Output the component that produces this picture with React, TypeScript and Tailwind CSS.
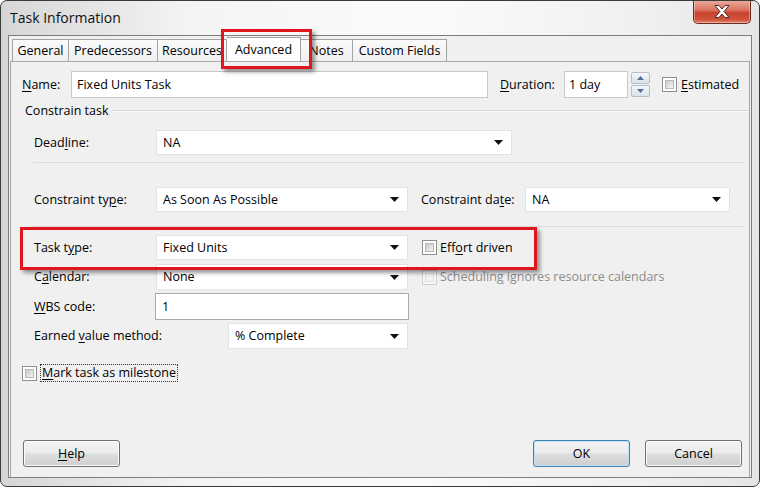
import React from "react";

function U({ children }: { children: React.ReactNode }) {
  return <span className="underline decoration-1 underline-offset-[2px]">{children}</span>;
}

function Arrow() {
  return (
    <svg width="9" height="5" viewBox="0 0 9 5" className="shrink-0">
      <path d="M0 0H9L4.5 5Z" fill="#111" />
    </svg>
  );
}

function Combo({ value, className }: { value: string; className: string }) {
  return (
    <div
      className={
        "flex items-center justify-between bg-white border border-[#e2e2e2] pl-[6px] pr-[8px] shrink-0 " +
        className
      }
    >
      <span>{value}</span>
      <Arrow />
    </div>
  );
}

function Check({ disabled }: { disabled?: boolean }) {
  return (
    <div
      className={
        disabled
          ? "w-[15px] h-[15px] border border-[#cfcfcf] bg-[#f7f7f7] p-[2px] shrink-0"
          : "w-[15px] h-[15px] border border-[#8e8f8f] bg-white p-[2px] shrink-0"
      }
    >
      <div
        className={
          disabled
            ? "w-full h-full bg-[#f2f2f2] border border-[#e2e2e2]"
            : "w-full h-full border border-[#b4b7bb] bg-gradient-to-br from-[#c6c9ce] to-[#f6f6f6]"
        }
      />
    </div>
  );
}

function Tab({
  children,
  className,
  selected,
}: {
  children: React.ReactNode;
  className: string;
  selected?: boolean;
}) {
  return (
    <div
      className={
        (selected
          ? "h-[24px] bg-[#fdfdfd] "
          : "h-[22px] bg-[linear-gradient(#fbfbfb,#efefef)] ") +
        "flex items-center justify-center border-t border-r border-[#a3a3a3] shrink-0 " +
        className
      }
    >
      {children}
    </div>
  );
}

function Btn({ children, primary }: { children: React.ReactNode; primary?: boolean }) {
  return (
    <div
      className={
        (primary
          ? "border-[#3c7fb1] shadow-[inset_0_0_0_1px_#bfe6f7] "
          : "border-[#707070] shadow-[inset_0_0_0_1px_#fbfbfb] ") +
        "w-[97px] h-[27px] rounded-[3px] border flex items-center justify-center bg-[linear-gradient(#f3f3f3,#ebebeb_48%,#dedede_52%,#cfcfcf)]"
      }
    >
      {children}
    </div>
  );
}

function SpinBtn({ up }: { up?: boolean }) {
  return (
    <div className="h-[12px] border border-[#b7c0ca] rounded-[2px] bg-[linear-gradient(#f5f7fa,#dbe2ea)] flex items-center justify-center">
      <svg width="7" height="4" viewBox="0 0 7 4">
        {up ? <path d="M0 4H7L3.5 0Z" fill="#4f6f9c" /> : <path d="M0 0H7L3.5 4Z" fill="#4f6f9c" />}
      </svg>
    </div>
  );
}

export default function App() {
  return (
    <div className="w-[760px] h-[487px] relative overflow-hidden rounded-[7px] border border-[#3a3a3a] bg-[linear-gradient(90deg,#d6d6d6,#f4f4f4_25%,#fbfbfb_55%,#f0f0f0_85%,#e6e6e6)] font-['Open_Sans',sans-serif] text-[12.5px] leading-[18px] text-black flex flex-col">
      {/* title bar */}
      <div className="h-[34px] flex items-start justify-between shrink-0">
        <div className="h-[34px] flex items-center pl-[9px] text-[14px] text-[#111]">Task Information</div>
        <div className="-mt-[1px] mr-[8px] w-[58px] h-[24px] rounded-b-[5px] border border-t-0 border-[#6a2c22] bg-[linear-gradient(#eab0a2,#d9705b_45%,#c7432d_55%,#d0533c_85%,#e38a6f)] shadow-[inset_0_0_0_1px_rgba(255,220,210,0.45)] flex items-center justify-center">
          <svg width="18" height="15" viewBox="0 0 18 15">
            <path
              d="M2 1.5H6L9 5L12 1.5H16L11 7.5L16 13.5H12L9 10L6 13.5H2L7 7.5Z"
              fill="#ffffff"
              stroke="#5a2a22"
              strokeWidth="1"
              strokeLinejoin="round"
            />
          </svg>
        </div>
      </div>

      {/* client area */}
      <div className="mx-[7px] h-[443px] border border-[#7d7d7d] bg-[#f0f0f0] flex flex-col shrink-0">
        {/* tab strip */}
        <div className="h-[25px] flex items-end pl-[3px] shrink-0">
          <Tab className="w-[57px] border-l">General</Tab>
          <Tab className="w-[89px]">Predecessors</Tab>
          <Tab className="w-[69px]">Resources</Tab>
          <Tab className="w-[74px]" selected>
            Advanced
          </Tab>
          <Tab className="w-[52px]">Notes</Tab>
          <Tab className="w-[94px]">Custom Fields</Tab>
        </div>

        {/* tab page */}
        <div className="mx-[1px] flex-1 border-t border-l border-r border-[#a9a9a9] bg-[#f0f0f0] flex flex-col">
          {/* name row */}
          <div className="mt-[9px] h-[27px] flex items-center pl-[11px]">
            <div className="w-[49px]">
              <U>N</U>ame:
            </div>
            <div className="w-[417px] h-[27px] bg-white border border-[#c8c8c8] flex items-center pl-[5px]">
              Fixed Units Task
            </div>
            <div className="ml-[12px] w-[64px]">
              <U>D</U>uration:
            </div>
            <div className="w-[64px] h-[27px] bg-white border border-[#c8c8c8] flex items-center pl-[4px]">
              1 day
            </div>
            <div className="ml-[3px] w-[19px] flex flex-col gap-[1px]">
              <SpinBtn up />
              <SpinBtn />
            </div>
            <div className="ml-[12px]">
              <Check />
            </div>
            <div className="ml-[4px]">
              <U>E</U>stimated
            </div>
          </div>

          {/* constrain task group */}
          <div className="mt-[4px] h-[18px] flex items-center pl-[14px]">
            <span>Constrain task</span>
            <div className="ml-[4px] flex-1 h-0 border-t border-b border-t-[#d6d6d6] border-b-[#fafafa]" />
          </div>

          <div className="mt-[10px] h-[25px] flex items-center pl-[23px]">
            <div className="w-[122px]">
              Dead<U>l</U>ine:
            </div>
            <Combo value="NA" className="w-[356px] h-[25px]" />
          </div>

          <div className="mt-[7px] ml-[22px] mr-[5px] border-t border-[#dcdcdc]" />

          <div className="mt-[24px] h-[25px] flex items-center pl-[23px]">
            <div className="w-[122px]">
              Constraint ty<U>p</U>e:
            </div>
            <Combo value="As Soon As Possible" className="w-[252px] h-[25px]" />
            <div className="ml-[13px] w-[104px]">
              Constraint da<U>t</U>e:
            </div>
            <Combo value="NA" className="w-[205px] h-[25px]" />
          </div>

          <div className="mt-[14px] ml-[22px] mr-[5px] border-t border-[#dcdcdc]" />

          <div className="mt-[8px] h-[25px] flex items-center pl-[23px]">
            <div className="w-[122px]">
              Task t<U>y</U>pe:
            </div>
            <Combo value="Fixed Units" className="w-[252px] h-[25px]" />
            <div className="ml-[14px]">
              <Check />
            </div>
            <div className="ml-[3px]">
              Eff<U>o</U>rt driven
            </div>
          </div>

          <div className="mt-[4px] h-[26px] flex items-center pl-[23px]">
            <div className="w-[122px]">
              C<U>a</U>lendar:
            </div>
            <Combo value="None" className="w-[252px] h-[26px]" />
            <div className="ml-[14px]">
              <Check disabled />
            </div>
            <div className="ml-[3px] text-[#8d8d8d]">
              Schedulin<U>g</U> ignores resource calendars
            </div>
          </div>

          <div className="mt-[3px] h-[27px] flex items-center pl-[23px]">
            <div className="w-[121px]">
              <U>W</U>BS code:
            </div>
            <div className="w-[254px] h-[27px] bg-white border border-[#ababab] flex items-center pl-[6px]">
              1
            </div>
          </div>

          <div className="mt-[3px] h-[26px] flex items-center pl-[23px]">
            <div className="w-[194px]">
              Earned <U>v</U>alue method:
            </div>
            <Combo value="% Complete" className="w-[180px] h-[26px]" />
          </div>

          <div className="mt-[15px] h-[18px] flex items-center pl-[11px]">
            <Check />
            <div className="ml-[3px] h-[18px] flex items-center px-[1px] border border-dotted border-[#333]">
              <U>M</U>ark task as milestone
            </div>
          </div>

          <div className="mt-[58px] h-[27px] flex items-center pl-[12px] pr-[7px]">
            <Btn>
              <U>H</U>elp
            </Btn>
            <div className="flex-1" />
            <Btn primary>OK</Btn>
            <div className="w-[15px]" />
            <Btn>Cancel</Btn>
          </div>
        </div>
      </div>

      {/* red highlight annotations */}
      <div className="absolute left-[220px] top-[28px] w-[91px] h-[40px] border-[3px] border-[#e0161d] shadow-[3px_3px_4px_rgba(0,0,0,0.4)]" />
      <div className="absolute left-[19px] top-[226px] w-[517px] h-[43px] border-[3px] border-[#e0161d] shadow-[3px_3px_4px_rgba(0,0,0,0.4)]" />
    </div>
  );
}
